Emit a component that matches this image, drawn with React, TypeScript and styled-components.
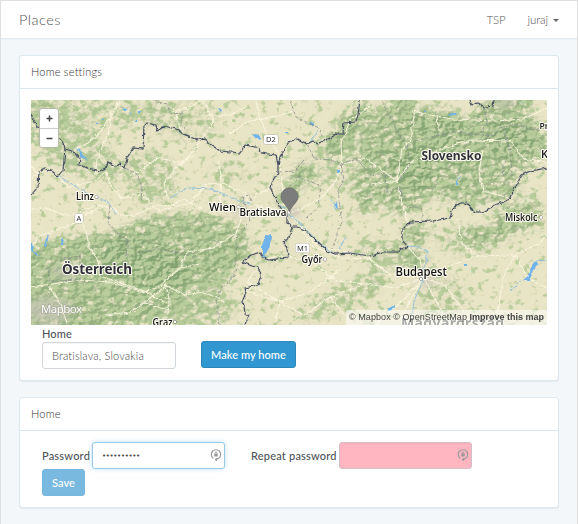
import React from "react";
import styled, { createGlobalStyle } from "styled-components";

const GlobalStyle = createGlobalStyle`
  *, *::before, *::after { box-sizing: border-box; }
  body {
    margin: 0;
    background: #f3f7fa;
    color: #636b6f;
    font-family: "Lato", "Open Sans", sans-serif;
    font-size: 11px;
    line-height: 18px;
  }
`;

const Page = styled.div`
  height: 524px;
  overflow: hidden;
  border: 1px solid #dfdfdf;
  border-bottom: 0;
  background: #f3f7fa;
`;

const Navbar = styled.nav`
  display: flex;
  align-items: center;
  height: 38px;
  padding: 0 18px;
  background: #fff;
  border-bottom: 1px solid #e4ecf1;
  box-shadow: 0 1px 0 #edf2f6;
`;

const Brand = styled.a`
  flex: 1;
  color: #555;
  font-size: 14.5px;
  font-weight: 300;
  letter-spacing: 0.5px;
`;

const NavLink = styled.a`
  display: flex;
  align-items: center;
  margin-left: 22px;
  padding-top: 1px;
  color: #555;
  font-size: 11.5px;
  font-weight: 300;
  letter-spacing: -0.1px;
`;

const Caret = styled.span`
  margin: 1px 0 0 5px;
  border-top: 3px solid #666;
  border-left: 3px solid transparent;
  border-right: 3px solid transparent;
`;

const Content = styled.main`
  display: flex;
  flex-direction: column;
  gap: 16px;
  padding: 16px 18px 0;
`;

const Panel = styled.section<{ $height: number }>`
  height: ${(p) => p.$height}px;
  background: #fff;
  border: 1px solid #dde8ef;
  border-radius: 3px;
  box-shadow: 0 1px 1px rgba(0, 0, 0, 0.06);
`;

const PanelHeading = styled.header`
  height: 33px;
  padding: 7px 11px;
  border-bottom: 1px solid #d8e6ed;
  color: #333;
  font-weight: 300;
  letter-spacing: 0.2px;
`;

const PanelBody = styled.div`
  padding: 11px;
`;

const MapFrame = styled.div`
  position: relative;
  width: 516px;
  height: 225px;
  overflow: hidden;
`;

const MapDrawing = styled.svg`
  display: block;
`;

const ZoomControl = styled.div`
  position: absolute;
  left: 8px;
  top: 8px;
  width: 20px;
  height: 40px;
  background: #fff;
  border: 1px solid #b8b8ab;
  border-radius: 3px;
`;

const ZoomButton = styled.button`
  display: flex;
  align-items: center;
  justify-content: center;
  width: 18px;
  height: 19px;
  padding: 0;
  border: 0;
  background: transparent;
  & + & { border-top: 1px solid #ccc; }
`;

const Attribution = styled.div`
  position: absolute;
  right: 0;
  bottom: 0;
  width: 201px;
  height: 15px;
  padding-left: 3px;
  background: rgba(255, 255, 255, 0.5);
  color: #444;
  font: 9px/15px "Liberation Sans", sans-serif;
  letter-spacing: 0.07px;
  white-space: nowrap;
`;

const Improve = styled.b`
  letter-spacing: 0;
`;

const HomeForm = styled.form`
  display: flex;
  align-items: flex-end;
  gap: 25px;
  height: 44px;
  padding: 0 11px;
`;

const Field = styled.div`
  display: flex;
  flex-direction: column;
`;

const Label = styled.label<{ $spacing: number; $width?: number }>`
  width: ${(p) => (p.$width ? p.$width + "px" : "auto")};
  color: #4e5458;
  font-weight: 500;
  letter-spacing: ${(p) => p.$spacing}px;
  white-space: nowrap;
`;

const StackedLabel = styled(Label)`
  height: 17px;
`;

const Input = styled.input<{ $state?: "focus" | "error" }>`
  display: block;
  width: 134px;
  height: 27px;
  padding: 0 9px;
  border: 1px solid ${(p) => (p.$state === "focus" ? "#98cbe8" : p.$state === "error" ? "#d2c0c6" : "#d0d6d9")};
  border-radius: 3px;
  outline: 0;
  background: ${(p) => (p.$state === "error" ? "#ffb6c1" : "#fff")};
  box-shadow: ${(p) => (p.$state === "focus" ? "0 0 5px rgba(152, 203, 232, 0.6)" : "inset 0 1px 1px rgba(0, 0, 0, 0.04)")};
  color: #444;
  font: 300 11px/18px "Lato", sans-serif;
  letter-spacing: 0.17px;
`;

const PasswordInput = styled(Input)`
  width: 133px;
  padding-left: 9px;
  color: #444;
  font: 7px/18px "DejaVu Sans", sans-serif;
  letter-spacing: -0.35px;
`;

const Button = styled.button<{ $width: number; $muted?: boolean; $spacing: number }>`
  width: ${(p) => p.$width}px;
  height: 27px;
  padding: 0;
  border: 1px solid ${(p) => (p.$muted ? "#75b7df" : "#2a88bd")};
  border-radius: 3px;
  background: ${(p) => (p.$muted ? "#79b9df" : "#3097d1")};
  color: #fff;
  font: 500 11px/18px "Lato", sans-serif;
  letter-spacing: ${(p) => p.$spacing}px;
`;

const HomeButton = styled(Button)`
  margin-bottom: 1px;
`;

const PasswordForm = styled.form`
  padding: 0 11px;
`;

const PasswordRow = styled.div`
  display: flex;
  align-items: center;
`;

const PasswordField = styled.div`
  display: flex;
  align-items: center;
  & + & { margin-left: 26px; }
`;

const InputWrap = styled.div`
  position: relative;
`;

const KeeperIcon = styled.svg`
  position: absolute;
  right: 3px;
  top: 6px;
`;

const borders = [
  "M31 115L35 122L37 127L50 130L59 137L63 143L65 149L64 160L63 170L58 176L53 172L45 168L39 171L38 187L31 195",
  "M65 149L72 151L80 158L79 165L88 168L100 171L107 167L108 162L115 166L120 164L125 168L127 158L133 148L143 149L144 125L147 123L156 125L157 131L165 126L178 130L183 134L188 136L197 140L203 138L210 144L220 151L240 153L245 145L260 148L261 153L268 154L276 155L278 165L278 173L272 183L271 189L276 200L279 205L282 210L287 215L287 223L292 227L297 227L305 230L317 242L327 251L335 254L350 253L370 256L383 252L398 252L407 246L402 240L402 230L410 222L433 221L450 218L453 209L460 203L466 203L472 209L475 212L483 212L495 205L508 200L515 187L522 175L530 171L547 168",
  "M278 165L280 158L285 148L290 142L296 138L307 144L313 141L318 144L332 137L337 133L343 133L344 123L355 122L358 115L360 100",
  "M292 227L289 238L283 242L287 248L288 257L270 260L265 259L260 252L252 255L242 262L252 266L258 267L261 275L258 285L245 288L246 292L243 300L245 313L248 315L245 325",
  "M470 100L472 105L478 103L485 107L493 106L494 100",
];

const regionBorders = [
  "M153 101L167 105L171 114L183 113L181 122L184 129",
  "M125 168L137 174L141 185L142 204",
  "M110 205L108 222L119 235L128 240L126 256L158 249L198 257",
  "M290 100L296 117L312 125L319 128L322 136",
  "M307 144L315 159L334 160L341 164L356 158L367 171",
  "M278 172L294 171L305 160M341 164L344 180L338 190L340 208L342 222L332 249",
  "M292 172L302 178L319 185L320 205L306 218",
  "M382 101L387 111L397 131L407 146L418 140L454 132L492 136L502 127L518 125L535 130L547 127",
  "M484 106L487 123L481 132M502 127L511 151L512 176L502 173L507 157",
  "M370 175L385 173L387 193L398 187L405 200M405 205L422 209L422 221M407 146L410 165L399 181",
  "M242 197L250 220L237 238L235 276L222 287L216 300L220 325",
  "M251 201L249 195L242 197M48 267L49 281L80 280L80 256L60 260",
];

const roads = [
  "M31 167L38 174L31 178M58 177L68 187L95 181L106 172L112 188L122 198L141 194L160 211L190 203L207 184L222 183L244 193L250 205L286 211L301 226L318 247L370 256",
  "M201 209L184 199L170 207L157 205L135 215L121 216L110 205M102 205L90 213L80 215",
  "M31 247L40 236L79 222L82 210L98 205L116 210M82 216L87 235L89 248L98 258L100 276L144 291L167 303",
  "M31 287L80 280L110 282L144 292L161 285L180 268L200 264M124 315L135 309L166 286",
  "M166 285L169 299L168 315M180 267L188 252L213 248L236 233L245 210M105 315L130 312L145 303L168 310",
  "M168 199L164 183L176 168L191 154L205 134L214 121L207 107L201 100",
  "M256 100L259 115L265 130L278 153L281 171L284 205L291 211",
  "M120 100L111 117L100 132L88 143L76 149M95 176L97 159L108 134L112 110M130 176L144 168L157 158L180 162L196 155",
  "M370 106L350 120L341 145L342 160L336 181L320 199L292 213M412 111L430 115L453 119L495 121L523 119L547 108",
  "M415 110L410 140L402 150L397 180M370 185L397 181L411 163L437 150L471 140L508 141",
  "M397 181L402 203L408 225M340 165L365 158L397 181M437 112L438 128M510 140L524 159L547 163M483 150L479 172L483 191L510 198",
  "M424 278L390 275L370 259L341 258L310 245L301 226M424 278L444 268L478 256L515 255L540 243L547 235",
  "M424 278L446 286L464 312M424 278L410 300L400 325M424 278L397 306L375 325M424 278L438 304L448 325M424 278L420 260L407 246",
  "M424 278L396 288L365 284L337 281L309 260M260 265L247 282L280 302L310 292L340 270M246 291L280 302L275 322M307 261L280 255L265 260",
  "M280 302L304 315L330 297L360 286M330 297L349 320M515 255L502 280L498 315M515 255L530 280L547 288M478 256L462 244L458 219",
  "M201 100L190 108L172 111M201 115L229 115L246 107M230 134L250 120L270 118L294 111M218 160L222 180L219 207M250 203L257 193L272 189",
  "M49 287L59 302L67 323M165 285L185 295L204 292L225 302M31 210L46 208L63 215L80 215M174 108L179 124L180 132",
];

const water = [
  "M76 148L80 151L83 155L85 157L88 160L84 159L80 156Z",
  "M251 135L257 134L262 138L261 140L255 137Z",
  "M122 109L125 108L127 110L125 112ZM128 112L131 113L130 115Z",
  "M449 115L453 112L457 115L456 116Z",
  "M47 236L49 234L46 248L44 246Z",
  "M62 237L64 237L63 246L62 246Z",
  "M31 243L35 247L33 250L40 257L37 256L31 250Z",
  "M266 236L270 234L272 238L269 248L265 254L267 260L262 254L262 245Z",
  "M523 280L528 276L532 265L536 260L538 264L533 270L530 280Z",
  "M387 309L395 305L395 308L389 311Z",
  "M335 204L337 202L338 209L336 208Z",
  "M218 108L222 111L220 112Z",
];

const rivers = [
  "M58 176L72 184L88 194L108 202L117 215M170 198L188 188L211 189L228 196L250 204M280 205L291 216L303 226L318 242L333 253",
  "M407 246L419 247L428 251L425 267L422 283L414 301L411 325M536 260L547 261M510 291L522 281",
  "M331 199L336 210M318 130L309 144M456 180L462 176M340 249L345 237M518 100L524 105",
];

const forests: Array<[number, number, number, number, number, number]> = [
  [80, 288, 110, 52, -8, 0.74],
  [175, 250, 75, 36, -5, 0.68],
  [175, 288, 48, 34, -15, 0.48],
  [67, 142, 64, 24, 34, 0.5],
  [94, 109, 75, 18, 5, 0.34],
  [150, 177, 27, 27, 0, 0.44],
  [185, 119, 35, 20, 0, 0.24],
  [227, 174, 19, 8, 0, 0.44],
  [291, 190, 8, 20, 32, 0.6],
  [304, 173, 12, 10, 30, 0.54],
  [349, 130, 14, 34, 38, 0.64],
  [389, 125, 16, 44, 35, 0.68],
  [430, 134, 34, 27, -15, 0.6],
  [468, 150, 78, 14, -5, 0.66],
  [470, 128, 62, 12, 5, 0.66],
  [455, 177, 66, 24, 10, 0.56],
  [377, 179, 20, 36, 25, 0.56],
  [411, 185, 20, 34, 25, 0.54],
  [519, 142, 28, 30, 0, 0.6],
  [505, 106, 34, 12, -20, 0.6],
  [415, 234, 13, 10, 0, 0.72],
  [410, 258, 20, 10, 20, 0.58],
  [483, 237, 25, 8, 0, 0.66],
  [518, 218, 28, 15, -20, 0.56],
  [378, 276, 9, 20, 30, 0.48],
  [340, 300, 45, 12, -25, 0.4],
  [375, 252, 22, 13, 0, 0.38],
  [464, 240, 28, 16, 0, 0.3],
  [442, 300, 22, 25, 30, 0.3],
  [340, 164, 30, 25, 0, 0.28],
  [274, 258, 20, 6, 0, 0.3],
  [202, 308, 35, 22, 0, 0.44],
  [220, 265, 16, 25, 20, 0.44],
];

const Terrain = () => (
  <MapDrawing width="516" height="225" viewBox="31 100 516 225">
    <defs>
      <filter id="woods" x="31" y="100" width="516" height="225" filterUnits="userSpaceOnUse" colorInterpolationFilters="sRGB">
        <feGaussianBlur in="SourceGraphic" stdDeviation="4" result="density" />
        <feTurbulence type="fractalNoise" baseFrequency="0.13 0.15" numOctaves="4" seed="7" />
        <feColorMatrix values="0 0 0 0 0  0 0 0 0 0  0 0 0 0 0  1 0 0 0 0" result="noise" />
        <feComposite in="density" in2="noise" operator="arithmetic" k2="0.52" k3="1.2" k4="-0.26" />
        <feComponentTransfer result="shape">
          <feFuncA type="linear" slope="5" intercept="-2.25" />
        </feComponentTransfer>
        <feFlood floodColor="#b0c893" floodOpacity="0.85" />
        <feComposite in2="shape" operator="in" />
      </filter>
      <filter id="relief" x="31" y="100" width="516" height="225" filterUnits="userSpaceOnUse" colorInterpolationFilters="sRGB">
        <feGaussianBlur in="SourceAlpha" stdDeviation="4" result="area" />
        <feTurbulence type="fractalNoise" baseFrequency="0.13 0.17" numOctaves="3" seed="21" result="height" />
        <feDiffuseLighting in="height" surfaceScale="5" diffuseConstant="1.15" lightingColor="#ffffff">
          <feDistantLight azimuth="225" elevation="52" />
        </feDiffuseLighting>
        <feColorMatrix values="0 0 0 0 0.47  0 0 0 0 0.6  0 0 0 0 0.41  -1.7 0 0 0 1.68" result="shade" />
        <feComposite in="shade" in2="area" operator="in" />
      </filter>
      <filter id="rough" x="31" y="100" width="516" height="225" filterUnits="userSpaceOnUse" colorInterpolationFilters="sRGB">
        <feTurbulence type="fractalNoise" baseFrequency="0.22" numOctaves="2" seed="4" />
        <feDisplacementMap in="SourceGraphic" scale="4" xChannelSelector="R" yChannelSelector="G" />
      </filter>
      <filter id="softPeak"><feGaussianBlur stdDeviation="4" /></filter>
    </defs>
    <rect x="31" y="100" width="516" height="225" fill="#e8e4c6" />
    <g filter="url(#woods)">
      <rect x="31" y="100" width="516" height="225" fill="#000" opacity="0.01" />
      {forests.map(([x, y, rx, ry, r, o], i) => (
        <ellipse key={i} cx={x} cy={y} rx={rx} ry={ry} opacity={o} transform={`rotate(${r} ${x} ${y})`} />
      ))}
    </g>
    <g filter="url(#relief)">
      {forests.map(([x, y, rx, ry, r, o], i) => (
        <ellipse key={i} cx={x} cy={y} rx={rx} ry={ry} opacity={o > 0.5 ? 0.55 : 0.18} transform={`rotate(${r} ${x} ${y})`} />
      ))}
    </g>
    <g fill="#c9c5ba" opacity="0.65" filter="url(#softPeak)">
      <ellipse cx="49" cy="310" rx="25" ry="13" />
      <ellipse cx="67" cy="272" rx="15" ry="6" />
      <ellipse cx="241" cy="211" rx="8" ry="6" />
      <ellipse cx="426" cy="279" rx="9" ry="8" />
      <ellipse cx="293" cy="213" rx="6" ry="6" />
      <ellipse cx="504" cy="103" rx="10" ry="5" />
    </g>
    <g filter="url(#rough)" fill="none" strokeLinejoin="round">
      <g stroke="#fbf6e0" strokeWidth="1.15" opacity="0.9">
        {roads.map((d) => <path key={d} d={d} />)}
      </g>
      <g stroke="#8fbfd9" strokeWidth="0.9">
        {rivers.map((d) => <path key={d} d={d} />)}
      </g>
      <g fill="#6fb3ea">
        {water.map((d) => <path key={d} d={d} />)}
        <path d="M96 123h2v1h-2zM101 119h3v1h-3zM135 120h2v2h-2zM138 111h2v2h-2zM310 123h3v2h-3zM337 170h2v3h-2zM286 132h2v1h-2zM465 264h2v2h-2zM456 181h2v3h-2zM424 111h2v1h-2z" />
      </g>
      <g stroke="#858c8c" strokeWidth="0.75" strokeDasharray="4 1.5">
        {regionBorders.map((d) => <path key={d} d={d} />)}
      </g>
      <g stroke="#a5a59c" strokeWidth="2.500" opacity="0.2">
        {borders.map((d) => <path key={d} d={d} />)}
      </g>
      <g stroke="#454f61" strokeWidth="1.100">
        {borders.map((d) => <path key={d} d={d} />)}
      </g>
    </g>
    <MapLabels />
    <ellipse cx="294" cy="212" rx="9" ry="3" transform="rotate(-25 294 212)" fill="#666" opacity="0.22" filter="url(#softPeak)" />
    <path d="M289.500 211.500C287 205 281 202 281 196.500A8.500 8.500 0 0 1 298 196.500C298 202 292 205 289.500 211.500Z" fill="#7c7c7c" stroke="#686868" strokeWidth="0.8" />
  </MapDrawing>
);

const places = [
  { name: "Linz", x: 76, y: 200, w: 18, size: 10, dot: [96.5, 197] },
  { name: "Wien", x: 209, y: 211, w: 27, size: 11.5, dot: [238.5, 207] },
  { name: "Bratislava", x: 239.5, y: 216, w: 47, size: 10, dot: [289, 212.5] },
  { name: "Győr", x: 301.5, y: 263, w: 21, size: 10, dot: [325, 259.5] },
  { name: "Miskolc", x: 505, y: 221, w: 32.5, size: 10, dot: [541, 217.5] },
  { name: "Budapest", x: 395.5, y: 276, w: 51.5, size: 12, dot: [421, 279] },
  { name: "Graz", x: 152.5, y: 326, w: 20, size: 10, dot: [175, 322] },
  { name: "Pr", x: 539.5, y: 129, w: 9, size: 9.5 },
  { name: "K", x: 541, y: 158, w: 7, size: 10 },
];

const countries = [
  { name: "Slovensko", x: 421.5, y: 160, w: 60, size: 12, fill: "#303039" },
  { name: "Österreich", x: 62, y: 274, w: 70, size: 13.5, fill: "#303039" },
  { name: "Magyarország", x: 401, y: 328, w: 103, size: 14, fill: "#55554f" },
];

const shields = [
  { name: "D2", x: 264, y: 135, w: 14 },
  { name: "M1", x: 295.5, y: 243.5, w: 14 },
  { name: "A", x: 75, y: 214, w: 8 },
];

const MapLabels = () => (
  <g fontFamily="Noto Sans, Open Sans, sans-serif" stroke="#fffef4" strokeWidth="2" strokeLinejoin="round" paintOrder="stroke">
    {shields.map((s) => (
      <g key={s.name} stroke="none">
        <rect x={s.x} y={s.y} width={s.w} height="9" rx="1.500" fill="#fff" stroke="#aaa69b" strokeWidth="0.8" />
        <text x={s.x + s.w / 2} y={s.y + 7.3} fontSize="7.500" textAnchor="middle" fill="#333">{s.name}</text>
      </g>
    ))}
    {places.map((p) => (
      <g key={p.name}>
        {p.dot && <circle cx={p.dot[0]} cy={p.dot[1]} r="1.400" fill="#fff" stroke="#555" strokeWidth="0.9" />}
        <text x={p.x} y={p.y} fontFamily="Open Sans, Noto Sans, sans-serif" fontSize={p.size} textLength={p.w} lengthAdjust="spacingAndGlyphs" fontWeight="600" fill="#111">{p.name}</text>
      </g>
    ))}
    {countries.map((c) => (
      <text key={c.name} x={c.x} y={c.y} fontSize={c.size} textLength={c.w} fontWeight="700" fill={c.fill}>{c.name}</text>
    ))}
    <text x="41" y="313" fontSize="11.500" textLength="41" fill="#fff" stroke="#777" strokeOpacity="0.45" strokeWidth="1">Mapbox</text>
  </g>
);

const PasswordMark = () => (
  <KeeperIcon width="12" height="14" viewBox="0 0 12 14" fill="none" stroke="#999" strokeWidth="1.200">
    <path d="M3.200 10.200A4.700 4.700 0 1 1 8.800 10.200L6.300 11.300M6.300 10v3M5 11.500h2.500" />
    <path d="M4.900 5.600V5a1.100 1.100 0 0 1 2.200 0v.6" strokeWidth="0.8" />
    <rect x="4.300" y="5.500" width="3.400" height="3" rx="0.500" fill="#999" stroke="none" />
  </KeeperIcon>
);

export default function App() {
  return (
    <Page>
      <GlobalStyle />
      <Navbar>
        <Brand>Places</Brand>
        <NavLink>TSP</NavLink>
        <NavLink>juraj<Caret /></NavLink>
      </Navbar>
      <Content>
        <Panel $height={326}>
          <PanelHeading>Home settings</PanelHeading>
          <PanelBody>
            <MapFrame>
              <Terrain />
              <ZoomControl>
                <ZoomButton aria-label="Zoom in">
                  <svg width="7" height="7" stroke="#444" strokeWidth="1.500"><path d="M0.500 3.500h6M3.500 .5v6" /></svg>
                </ZoomButton>
                <ZoomButton aria-label="Zoom out">
                  <svg width="7" height="7" stroke="#444" strokeWidth="1.500"><path d="M0.500 3.500h6" /></svg>
                </ZoomButton>
              </ZoomControl>
              <Attribution>© Mapbox © OpenStreetMap <Improve>Improve this map</Improve></Attribution>
            </MapFrame>
            <HomeForm>
              <Field>
                <StackedLabel htmlFor="home" $spacing={0.1}>Home</StackedLabel>
                <Input id="home" defaultValue="Bratislava, Slovakia" />
              </Field>
              <HomeButton type="button" $width={95} $spacing={0.07}>Make my home</HomeButton>
            </HomeForm>
          </PanelBody>
        </Panel>
        <Panel $height={111}>
          <PanelHeading>Home</PanelHeading>
          <PanelBody>
            <PasswordForm>
              <PasswordRow>
                <PasswordField>
                  <Label htmlFor="password" $spacing={0.2} $width={50}>Password</Label>
                  <InputWrap>
                    <PasswordInput id="password" type="password" defaultValue="abcdefghij" $state="focus" />
                    <PasswordMark />
                  </InputWrap>
                </PasswordField>
                <PasswordField>
                  <Label htmlFor="repeat" $spacing={0.2} $width={88}>Repeat password</Label>
                  <InputWrap>
                    <PasswordInput id="repeat" type="password" $state="error" />
                    <PasswordMark />
                  </InputWrap>
                </PasswordField>
              </PasswordRow>
              <Button type="button" $width={43} $muted $spacing={0.1}>Save</Button>
            </PasswordForm>
          </PanelBody>
        </Panel>
      </Content>
    </Page>
  );
}
